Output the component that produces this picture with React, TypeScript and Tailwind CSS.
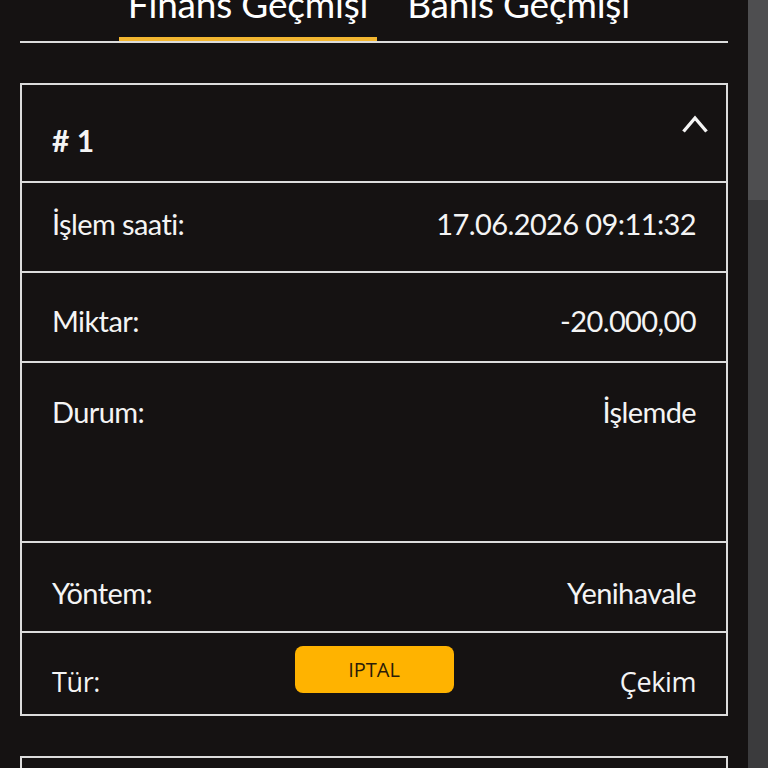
import React from "react";

const lato = { fontFamily: "Lato, 'Noto Sans', sans-serif" };

function Row({
  label,
  value,
  h,
  pt,
  last,
}: {
  label: string;
  value: string;
  h: string;
  pt: string;
  last?: boolean;
}) {
  return (
    <div
      className={`flex justify-between items-start px-[30px] ${h} ${pt} ${last ? "" : "border-b-2 border-[#dcdcdc]"}`}
    >
      <span className="text-[29px] leading-[34px] tracking-[-0.6px] text-[#f4f4f4] font-['Lato',sans-serif]">
        {label}
      </span>
      <span className="text-[29px] leading-[34px] tracking-[-0.6px] text-[#f4f4f4] font-['Lato',sans-serif]">
        {value}
      </span>
    </div>
  );
}

export default function App() {
  return (
    <div className="flex w-[768px] h-[768px] overflow-hidden bg-[#151212]" style={lato}>
      <div className="w-[748px] px-[20px] flex flex-col">
        {/* Tabs */}
        <div className="flex h-[43px] border-b-2 border-[#dcdcdc] pl-[99px]">
          <div className="w-[258px] h-[41px] border-b-4 border-[#f2b630] flex flex-col items-center">
            <span className="-mt-[15px] text-[37px] leading-[37px] tracking-[-0.2px] text-white font-['Lato',sans-serif] whitespace-nowrap">
              Finans Geçmişi
            </span>
          </div>
          <div className="ml-[21px] w-[241px] h-[41px] flex flex-col items-center">
            <span className="-mt-[15px] text-[37px] leading-[37px] tracking-[-0.2px] text-white font-['Lato',sans-serif] whitespace-nowrap">
              Bahis Geçmişi
            </span>
          </div>
        </div>

        {/* Card 1 */}
        <div className="mt-[40px] border-2 border-[#dcdcdc] flex flex-col">
          <div className="flex justify-between items-start h-[98px] pl-[30px] pr-[17px] border-b-2 border-[#dcdcdc]">
            <span className="mt-[38px] text-[30px] leading-[34px] font-bold text-[#f4f4f4] font-['Lato',sans-serif]">
              # 1
            </span>
            <svg
              className="mt-[29px]"
              width="28"
              height="20"
              viewBox="0 0 28 20"
              fill="none"
              stroke="#f4f4f4"
              strokeWidth="3.4"
            >
              <polyline points="2.5,17.5 14,4 25.5,17.5" />
            </svg>
          </div>
          <Row label="İşlem saati:" value="17.06.2026 09:11:32" h="h-[90px]" pt="pt-[24px]" />
          <Row label="Miktar:" value="-20.000,00" h="h-[90px]" pt="pt-[31px]" />
          <Row label="Durum:" value="İşlemde" h="h-[180px]" pt="pt-[32px]" />
          <Row label="Yöntem:" value="Yenihavale" h="h-[90px]" pt="pt-[33px]" />
          <div className="grid grid-cols-[1fr_auto_1fr] items-start h-[81px] px-[30px]">
            <span className="pt-[32px] text-[27px] leading-[34px] tracking-[-0.4px] text-[#f4f4f4] font-['Open_Sans',sans-serif]">
              Tür:
            </span>
            <div className="mt-[13px] w-[159px] h-[47px] rounded-[8px] bg-[#ffb300] flex items-center justify-center">
              <span className="text-[20px] leading-[24px] text-[#2a1c08] font-['Open_Sans',sans-serif]">
                IPTAL
              </span>
            </div>
            <span className="pt-[32px] text-right text-[27px] leading-[34px] tracking-[-0.4px] text-[#f4f4f4] font-['Open_Sans',sans-serif]">
              Çekim
            </span>
          </div>
        </div>

        {/* Card 2 (partially visible) */}
        <div className="mt-[40px] border-2 border-[#dcdcdc] h-[200px] shrink-0"></div>
      </div>

      {/* Scrollbar */}
      <div className="w-[20px] h-full flex flex-col bg-[#3b3b3d]">
        <div className="h-[200px] bg-[#4e4e50]"></div>
      </div>
    </div>
  );
}
